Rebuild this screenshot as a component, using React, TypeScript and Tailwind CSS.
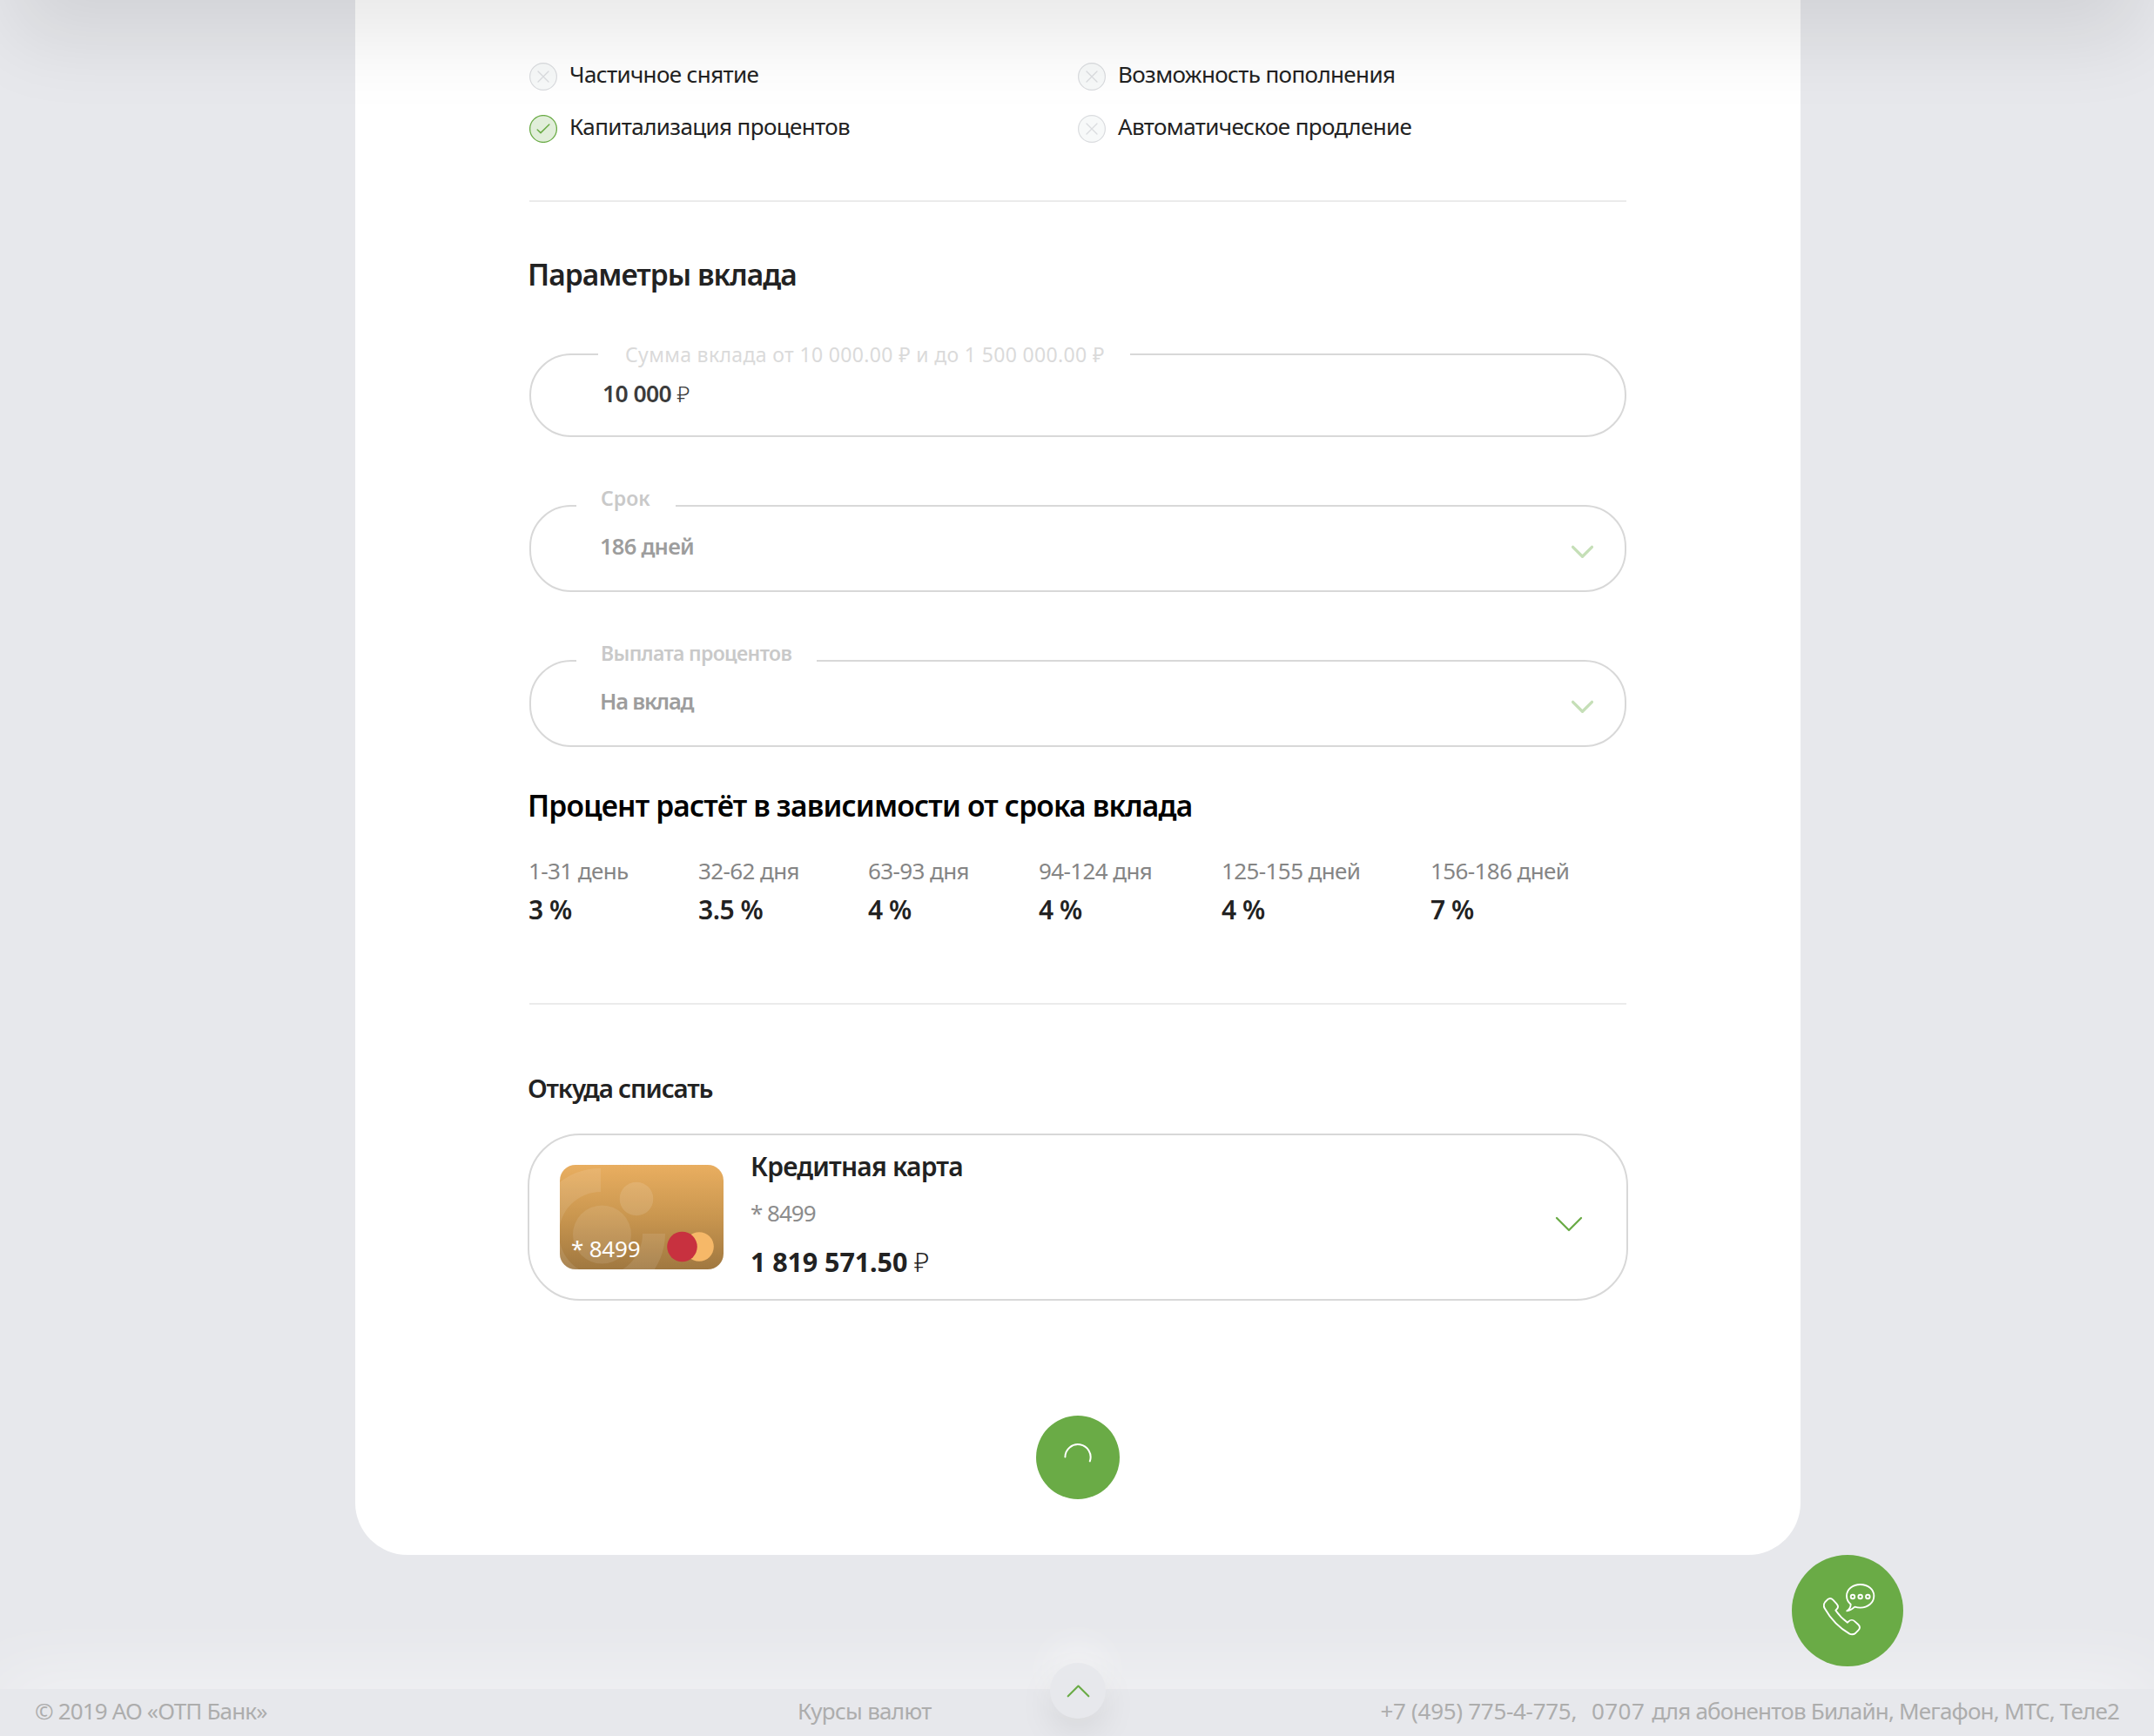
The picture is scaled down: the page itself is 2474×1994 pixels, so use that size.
import React from 'react';

function Chevron({ className, width }: { className: string; width: number }) {
  return (
    <svg viewBox="0 0 32 20" className={className} fill="none" stroke="currentColor" strokeWidth={width} strokeLinecap="round" strokeLinejoin="round">
      <path d="M2 3 16 17 30 3" />
    </svg>
  );
}

function Option({ label, enabled }: { label: string; enabled?: boolean }) {
  return (
    <li className="flex h-[60px] items-center gap-[14px]">
      {enabled ? (
        <svg viewBox="0 0 32 32" className="size-8 shrink-0 text-[#6aab46]" fill="none" stroke="currentColor">
          <circle cx="16" cy="16" r="15.4" fill="#e1eeda" strokeWidth="1.3" />
          <path d="M9.2 17 13 20.6 22.8 11" strokeWidth="1.5" strokeLinecap="round" strokeLinejoin="round" />
        </svg>
      ) : (
        <svg viewBox="0 0 32 32" className="size-8 shrink-0 text-[#dadcdf]" fill="none" stroke="currentColor">
          <circle cx="16" cy="16" r="15.4" fill="#f7f9f9" strokeWidth="1.2" />
          <path d="M10 10 22 22M22 10 10 22" strokeWidth="1.3" strokeLinecap="round" />
        </svg>
      )}
      <span className="pb-[6px] text-[26px] tracking-[-0.62px] whitespace-nowrap">{label}</span>
    </li>
  );
}

const rates = [
  { period: '1-31 день', rate: '3 %', width: 'w-[195px]' },
  { period: '32-62 дня', rate: '3.5 %', width: 'w-[195px]' },
  { period: '63-93 дня', rate: '4 %', width: 'w-[196px]' },
  { period: '94-124 дня', rate: '4 %', width: 'w-[210px]' },
  { period: '125-155 дней', rate: '4 %', width: 'w-[240px]' },
  { period: '156-186 дней', rate: '7 %', width: 'w-[200px]' },
];

function Rouble() {
  return <span className="font-light tracking-normal">₽</span>;
}

function SelectField({ label, value, labelClass, valueClass }: { label: string; value: string; labelClass: string; valueClass: string }) {
  return (
    <div className="relative flex h-[100px] items-center justify-between rounded-[48px] border-2 border-[#d8d8d8] pr-[36px] pl-[79px]">
      <span className={`absolute -top-[30px] left-[52px] bg-white pl-[28px] text-[23px] leading-[40px] font-semibold whitespace-nowrap text-[#c9c9c9] ${labelClass}`}>
        {label}
      </span>
      <span className={`pb-[7px] text-[25.5px] leading-[40px] font-semibold text-[#9d9d9d] ${valueClass}`}>{value}</span>
      <Chevron className="mt-[8px] w-[25px] text-[#c5dfb7]" width={4.2} />
    </div>
  );
}

function BankCard() {
  return (
    <div className="relative h-[120px] w-[188px] shrink-0 overflow-hidden rounded-[18px] bg-linear-to-b from-[#e9ae60] via-[#c9964f] to-[#a07840]">
      <svg viewBox="0 0 188 120" className="absolute inset-0 size-full">
        <path d="M47 4A75 75 0 1 0 121 79H95A48 48 0 1 1 47 31Z" fill="#fff" opacity=".1" />
        <circle cx="48.5" cy="80" r="33.5" fill="#fff" opacity=".1" />
        <circle cx="88" cy="39" r="19.3" fill="#fff" opacity=".12" />
        <circle cx="160" cy="94" r="16.8" fill="#f6b868" />
        <circle cx="140.5" cy="94" r="17.3" fill="#c8313f" />
      </svg>
      <span className="absolute top-[78px] left-[13px] text-[26px] leading-[36px] tracking-[-0.2px] text-white">* 8499</span>
    </div>
  );
}

export default function App() {
  return (
    <div className="relative flex h-[1994px] w-[2474px] flex-col overflow-hidden bg-[#e7e8ec] font-['Noto_Sans',sans-serif] text-[#222]">
      <div className="pointer-events-none absolute inset-x-0 -top-[200px] z-10 h-[200px] shadow-[0_60px_90px_-15px_rgba(0,0,0,0.09)]" />

      <main className="ml-[408px] flex h-[1786px] w-[1660px] flex-col rounded-b-[60px] bg-white px-[200px] pt-[58px]">
        <ul className="grid grid-cols-2">
          <Option label="Частичное снятие" />
          <Option label="Возможность пополнения" />
          <Option label="Капитализация процентов" enabled />
          <Option label="Автоматическое продление" />
        </ul>

        <hr className="mt-[52px] h-[2px] border-0 bg-[#ebebeb]" />

        <h2 className="mt-[59px] -ml-[2px] text-[33.5px] leading-[48px] font-semibold tracking-[-0.95px]">Параметры вклада</h2>

        <div className="relative mt-[67px] h-24 rounded-full border-2 border-[#d8d8d8] pl-[82px]">
          <span className="absolute -top-[21px] left-[77px] w-[611px] bg-white pl-[31px] text-[23px] leading-[40px] tracking-[0.35px] whitespace-nowrap text-[#dadada]">
            Сумма вклада от 10 000.00 ₽ и до 1 500 000.00 ₽
          </span>
          <p className="mt-[24px] text-[26.5px] leading-[40px] font-semibold tracking-[-0.6px] text-[#3c3c3c]">
            10 000 <Rouble />
          </p>
        </div>

        <div className="mt-[78px] flex flex-col gap-[78px]">
          <SelectField label="Срок" value="186 дней" labelClass="w-[114px]" valueClass="tracking-[-0.75px]" />
          <SelectField label="Выплата процентов" value="На вклад" labelClass="w-[276px] tracking-[-0.65px]" valueClass="tracking-[-1.2px]" />
        </div>

        <h2 className="mt-[43px] -ml-[2px] text-[33.5px] leading-[48px] font-semibold tracking-[-0.8px] text-black">
          Процент растёт в зависимости от срока вклада
        </h2>
        <dl className="mt-[31px] -ml-[1px] flex">
          {rates.map((r) => (
            <div key={r.period} className={`flex shrink-0 flex-col gap-[3px] ${r.width}`}>
              <dt className="text-[26px] leading-[40px] tracking-[-0.6px] whitespace-nowrap text-[#858585]">{r.period}</dt>
              <dd className="text-[30px] leading-[44px] font-semibold tracking-[-0.5px]">{r.rate}</dd>
            </div>
          ))}
        </dl>

        <hr className="mt-[85px] h-[2px] border-0 bg-[#ebebeb]" />

        <h3 className="mt-[74px] -ml-[2px] text-[29.5px] leading-[44px] font-semibold tracking-[-1.18px]">Откуда списать</h3>
        <div className="-mx-[2px] mt-[30px] flex h-[192px] items-center rounded-[60px] border-2 border-[#d8d8d8] pr-[50px] pl-[35px]">
          <BankCard />
          <div className="ml-[31px] grow pb-[8px]">
            <p className="text-[30px] leading-[44px] font-semibold tracking-[-0.8px]">Кредитная карта</p>
            <p className="mt-[13px] text-[26px] leading-[36px] tracking-[-1px] text-[#8c8c8c]">* 8499</p>
            <p className="mt-[16px] text-[30.5px] leading-[44px] font-bold tracking-[-0.1px]">
              1 819 571.50 <Rouble />
            </p>
          </div>
          <Chevron className="mt-[16px] w-[32px] text-[#6aab46]" width={2.3} />
        </div>

        <button className="mx-auto mt-[132px] flex size-24 shrink-0 items-center justify-center rounded-full bg-[#6aab46]">
          <svg viewBox="0 0 32 32" className="size-8" fill="none" stroke="#fff" strokeWidth="2" strokeLinecap="round">
            <path d="M1.4 15.5A14.6 14.6 0 1 1 29.8 20.4" />
          </svg>
        </button>
      </main>

      <button className="absolute top-[1786px] left-[2058px] z-10 size-32 rounded-full bg-[#6aab46]">
        <svg viewBox="84 78 384 384" className="size-full" fill="none" stroke="#fff" strokeWidth="5.6" strokeLinejoin="round">
          <path d="M287 248C277 240 273 230 273 219C273 197 293 180 320 180C347 180 367 197 367 219C367 243 346 260 320 260C313 260 307 259 301 257C293 264 284 270 274 271C283 265 287 258 287 248Z" />
          <circle cx="294" cy="222" r="6.8" />
          <circle cx="320" cy="222" r="6.8" />
          <circle cx="346" cy="222" r="6.8" />
          <path d="M207 232C213 227 220 227 226 233L239 247C245 254 244 261 237 267L235 269C246 285 260 299 276 311L280 307C286 301 295 301 301 307L313 318C319 324 319 332 313 338L304 347C298 352 290 353 283 350C246 329 217 297 197 262C193 254 194 246 199 240Z" />
        </svg>
      </button>

      <footer className="absolute inset-x-0 bottom-0 flex h-[54px] items-center bg-[#e7e8ec] px-10 pb-[5px] text-[26px] leading-[40px] whitespace-nowrap text-[#adadad] shadow-[0_0_90px_rgba(255,255,255,0.75)]">
        <span className="w-[876px] tracking-[-0.84px]">© 2019 АО «ОТП Банк»</span>
        <a className="tracking-[-0.7px]">Курсы валют</a>
        <span className="ml-auto tracking-[-0.3px]">+7 (495) 775-4-775,</span>
        <span className="ml-[17px] tracking-[0.4px]">0707</span>
        <span className="ml-[8px] tracking-[-0.8px]">для абонентов Билайн, Мегафон, МТС, Теле2</span>
      </footer>

      <button className="absolute top-[1910px] left-[1206px] flex size-16 items-center justify-center rounded-full bg-[#e7e8ec] shadow-[0_16px_40px_rgba(0,0,0,0.08),0_-20px_40px_rgba(255,255,255,0.45)]">
        <Chevron className="w-[27px] rotate-180 text-[#6aab46]" width={2.5} />
      </button>
    </div>
  );
}
